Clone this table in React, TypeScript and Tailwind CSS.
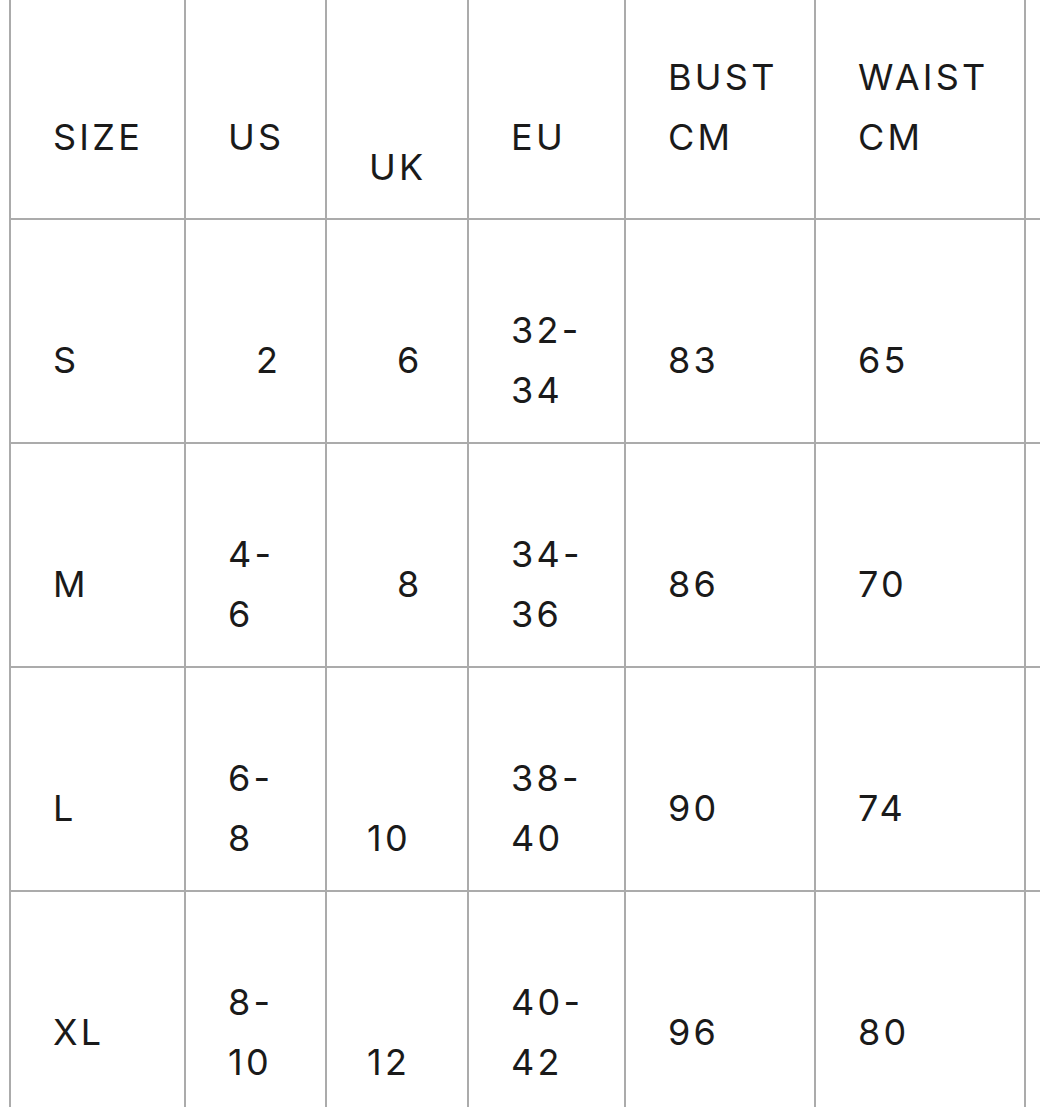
const rows = [
  { size: "S", us: ["2"], usPad: true, uk: "6", ukBottom: false, eu: ["32-", "34"], bust: "83", waist: "65" },
  { size: "M", us: ["4-", "6"], usPad: false, uk: "8", ukBottom: false, eu: ["34-", "36"], bust: "86", waist: "70" },
  { size: "L", us: ["6-", "8"], usPad: false, uk: "10", ukBottom: true, eu: ["38-", "40"], bust: "90", waist: "74" },
  { size: "XL", us: ["8-", "10"], usPad: false, uk: "12", ukBottom: true, eu: ["40-", "42"], bust: "96", waist: "80" },
];

function Lines({ items }: { items: string[] }) {
  return (
    <div>
      {items.map((t) => (
        <div key={t}>{t}</div>
      ))}
    </div>
  );
}

export default function App() {
  const head = "bg-white flex items-end pb-[51px] pl-[42px]";
  const cell = "bg-white flex items-center pt-[80px] pb-[22px] pl-[42px]";

  return (
    <div className="w-[1040px] h-[1107px] overflow-hidden bg-white">
      <div
        className="ml-[9px] w-[1240px] grid grid-cols-[173px_139px_140px_155px_188px_208px_200px] grid-rows-[218px_222px_222px_222px_222px] gap-[2px] pl-[2px] bg-[#ababab] text-[36px] leading-[60px] tracking-[0.09em] text-[#1a1a1a]"
        style={{ fontFamily: "Inter, 'Liberation Sans', sans-serif" }}
      >
        <div className={head}>SIZE</div>
        <div className={head}>US</div>
        <div className="bg-white flex items-end pb-[21px] pl-[42px]">UK</div>
        <div className={head}>EU</div>
        <div className={head}>
          <Lines items={["BUST", "CM"]} />
        </div>
        <div className={head}>
          <Lines items={["WAIST", "CM"]} />
        </div>
        <div className="bg-white" />

        {rows.map((r) => (
          <div key={r.size} className="contents">
            <div className={cell}>{r.size}</div>
            <div className={r.usPad ? "bg-white flex items-center pt-[80px] pb-[22px] pl-[70px]" : cell}>
              <Lines items={r.us} />
            </div>
            {r.ukBottom ? (
              <div className="bg-white flex items-end pt-[80px] pb-[22px] pl-[40px]">{r.uk}</div>
            ) : (
              <div className="bg-white flex items-center pt-[80px] pb-[22px] pl-[70px]">{r.uk}</div>
            )}
            <div className={cell}>
              <Lines items={r.eu} />
            </div>
            <div className={cell}>{r.bust}</div>
            <div className={cell}>{r.waist}</div>
            <div className="bg-white" />
          </div>
        ))}
      </div>
    </div>
  );
}
